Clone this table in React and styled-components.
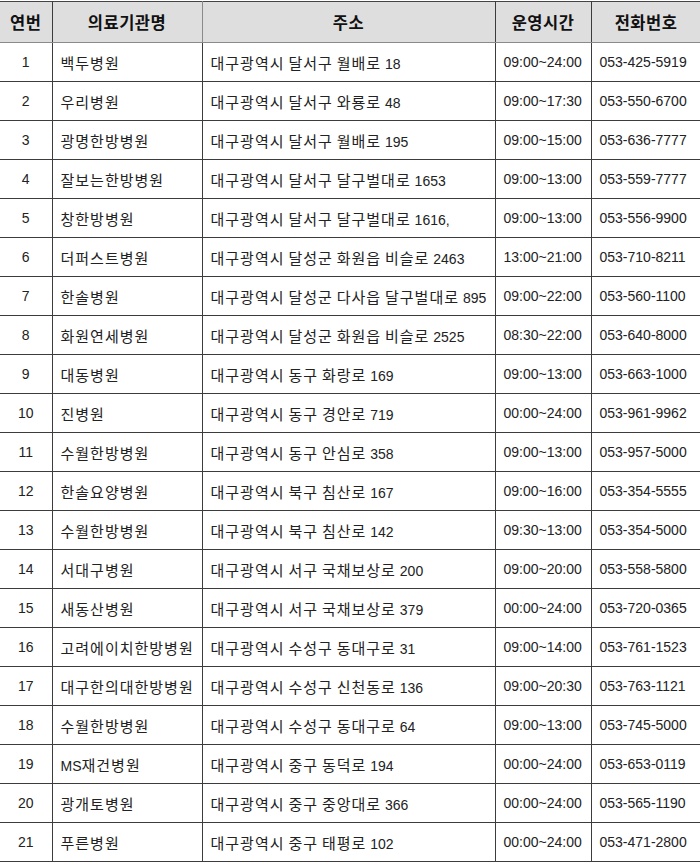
import React from "react";
import styled, { createGlobalStyle } from "styled-components";

const Global = createGlobalStyle`
  html, body { margin: 0; padding: 0; background: #fff; }
  body { font-family: "Liberation Sans", "Noto Sans CJK KR", sans-serif; color: #222; }
`;

const Table = styled.table`
  border-collapse: collapse;
  width: 701px;
  margin-top: 1px;
  table-layout: fixed;
`;

const Th = styled.th`
  background: #dedede;
  font-size: 16px;
  font-weight: bold;
  color: #111;
  height: 40px;
  padding: 0;
  text-align: center;
  border: 1px solid ${(p) => (p.$soft ? "#8a8a8a" : "#3c3c3c")};
  border-top: 1px solid #444;
  border-bottom: 1px solid #8a8a8a;
  &:first-child { border-left: none; }
`;

const HeadText = styled.span`
  font-size: 16.5px;
  letter-spacing: 0.5px;
`;

const Td = styled.td`
  height: 38px;
  padding: 0 0 0 ${(p) => (p.$center ? 0 : 8)}px;
  font-size: 14px;
  text-align: ${(p) => (p.$center ? "center" : "left")};
  white-space: nowrap;
  overflow: hidden;
  border-top: 1px solid #3c3c3c;
  border-bottom: 1px solid #3c3c3c;
  border-left: 1px solid ${(p) => (p.$soft ? "#8a8a8a" : "#3c3c3c")};
  border-right: 1px solid #3c3c3c;
  &:first-child { border-left: none; }
`;

const Han = styled.span`
  font-size: 15px;
  letter-spacing: 1px;
`;

function KoText({ text }) {
  const parts = text.split(/([\uAC00-\uD7A3]+)/);
  return parts.map((p, i) =>
    /[\uAC00-\uD7A3]/.test(p) ? <Han key={i}>{p}</Han> : <React.Fragment key={i}>{p}</React.Fragment>
  );
}

const rows = [
  ["백두병원", "대구광역시 달서구 월배로 18", "09:00~24:00", "053-425-5919"],
  ["우리병원", "대구광역시 달서구 와룡로 48", "09:00~17:30", "053-550-6700"],
  ["광명한방병원", "대구광역시 달서구 월배로 195", "09:00~15:00", "053-636-7777"],
  ["잘보는한방병원", "대구광역시 달서구 달구벌대로 1653", "09:00~13:00", "053-559-7777"],
  ["창한방병원", "대구광역시 달서구 달구벌대로 1616,", "09:00~13:00", "053-556-9900"],
  ["더퍼스트병원", "대구광역시 달성군 화원읍 비슬로 2463", "13:00~21:00", "053-710-8211"],
  ["한솔병원", "대구광역시 달성군 다사읍 달구벌대로 895", "09:00~22:00", "053-560-1100"],
  ["화원연세병원", "대구광역시 달성군 화원읍 비슬로 2525", "08:30~22:00", "053-640-8000"],
  ["대동병원", "대구광역시 동구 화랑로 169", "09:00~13:00", "053-663-1000"],
  ["진병원", "대구광역시 동구 경안로 719", "00:00~24:00", "053-961-9962"],
  ["수월한방병원", "대구광역시 동구 안심로 358", "09:00~13:00", "053-957-5000"],
  ["한솔요양병원", "대구광역시 북구 침산로 167", "09:00~16:00", "053-354-5555"],
  ["수월한방병원", "대구광역시 북구 침산로 142", "09:30~13:00", "053-354-5000"],
  ["서대구병원", "대구광역시 서구 국채보상로 200", "09:00~20:00", "053-558-5800"],
  ["새동산병원", "대구광역시 서구 국채보상로 379", "00:00~24:00", "053-720-0365"],
  ["고려에이치한방병원", "대구광역시 수성구 동대구로 31", "09:00~14:00", "053-761-1523"],
  ["대구한의대한방병원", "대구광역시 수성구 신천동로 136", "09:00~20:30", "053-763-1121"],
  ["수월한방병원", "대구광역시 수성구 동대구로 64", "09:00~13:00", "053-745-5000"],
  ["MS재건병원", "대구광역시 중구 동덕로 194", "00:00~24:00", "053-653-0119"],
  ["광개토병원", "대구광역시 중구 중앙대로 366", "00:00~24:00", "053-565-1190"],
  ["푸른병원", "대구광역시 중구 태평로 102", "00:00~24:00", "053-471-2800"],
];

export default function App() {
  return (
    <>
      <Global />
      <Table>
        <colgroup>
          <col style={{ width: 52 }} />
          <col style={{ width: 150 }} />
          <col style={{ width: 293 }} />
          <col style={{ width: 96 }} />
          <col style={{ width: 110 }} />
        </colgroup>
        <thead>
          <tr>
            <Th><HeadText>연번</HeadText></Th>
            <Th $soft><HeadText>의료기관명</HeadText></Th>
            <Th><HeadText>주소</HeadText></Th>
            <Th><HeadText>운영시간</HeadText></Th>
            <Th $soft><HeadText>전화번호</HeadText></Th>
          </tr>
        </thead>
        <tbody>
          {rows.map((r, i) => (
            <tr key={i}>
              <Td $center>{i + 1}</Td>
              <Td $soft><KoText text={r[0]} /></Td>
              <Td><KoText text={r[1]} /></Td>
              <Td>{r[2]}</Td>
              <Td $soft>{r[3]}</Td>
            </tr>
          ))}
        </tbody>
      </Table>
    </>
  );
}
